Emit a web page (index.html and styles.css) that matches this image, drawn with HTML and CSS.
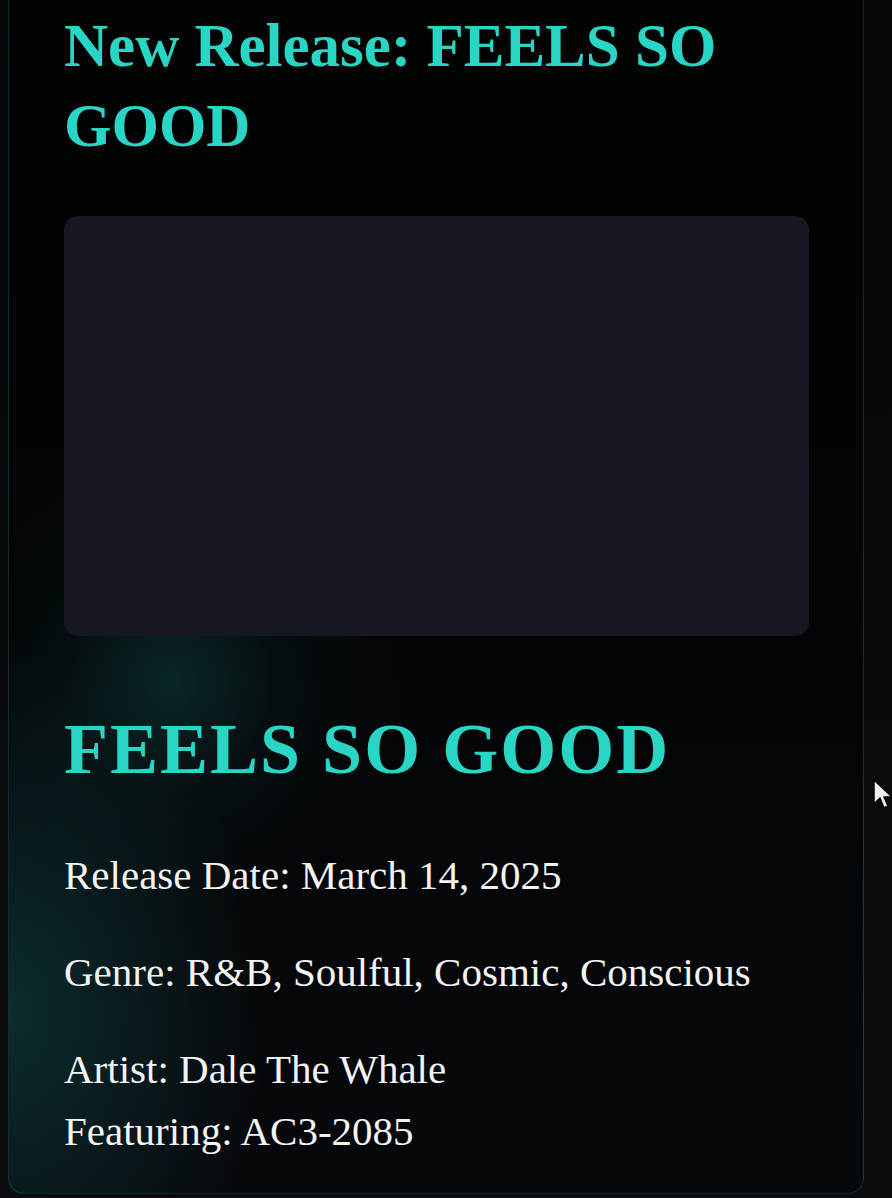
FILE: index.html
```html
<!DOCTYPE html>
<html lang="en">
<head>
<meta charset="utf-8">
<title>FEELS SO GOOD</title>
<link rel="stylesheet" href="styles.css">
</head>
<body>
<main class="card">
  <h1 class="release-title">New Release: FEELS SO GOOD</h1>
  <div class="cover"></div>
  <h2 class="song-title">FEELS SO GOOD</h2>
  <p class="meta">Release Date: March 14, 2025</p>
  <p class="meta">Genre: R&amp;B, Soulful, Cosmic, Conscious</p>
  <p class="meta">Artist: Dale The Whale<br>Featuring: AC3-2085</p>
</main>
<svg class="cursor" width="22" height="34" viewBox="0 0 22 34" aria-hidden="true">
  <path d="M1 1 L1 25 L7 19 L11 29 L15 27 L11 18 L19 18 Z" fill="#f2f2f2" stroke="#000" stroke-width="1.5" stroke-linejoin="round"/>
</svg>
</body>
</html>
```
FILE: styles.css
```css
html, body {
  margin: 0;
  padding: 0;
}
body {
  width: 892px;
  height: 1198px;
  overflow: hidden;
  background: linear-gradient(180deg, #06070a 0%, #0a0c10 100%);
  font-family: "Liberation Serif", "Times New Roman", serif;
  position: relative;
}
.card {
  box-sizing: border-box;
  margin-left: 8px;
  width: 856px;
  height: 1194px;
  padding: 6px 55px 0 55px;
  border: 1px solid rgba(40, 120, 120, 0.35);
  border-top: none;
  border-radius: 0 0 16px 16px;
  background:
    radial-gradient(circle at 162px 682px, rgba(18, 80, 80, 0.45) 0, rgba(10, 40, 42, 0.25) 110px, rgba(0, 0, 0, 0) 230px),
    radial-gradient(ellipse 260px 360px at 0 1010px, rgba(20, 90, 90, 0.45) 0, rgba(0, 0, 0, 0) 100%),
    linear-gradient(180deg, #020303 0%, #030405 50%, #07080c 100%);
}
.release-title {
  margin: 0;
  font-size: 61px;
  line-height: 80px;
  font-weight: 700;
  color: #29d5c5;
}
.cover {
  margin-top: 50px;
  width: 745px;
  height: 420px;
  border-radius: 14px;
  background: #151821;
}
.song-title {
  margin: 68px 0 50px 0;
  font-size: 72px;
  line-height: 90px;
  font-weight: 700;
  letter-spacing: 2px;
  color: #29d5c5;
}
.meta {
  margin: 35px 0 0 0;
  font-size: 41px;
  line-height: 62px;
  color: #f3f3f3;
}
.cursor {
  position: absolute;
  left: 873px;
  top: 779px;
}
```
